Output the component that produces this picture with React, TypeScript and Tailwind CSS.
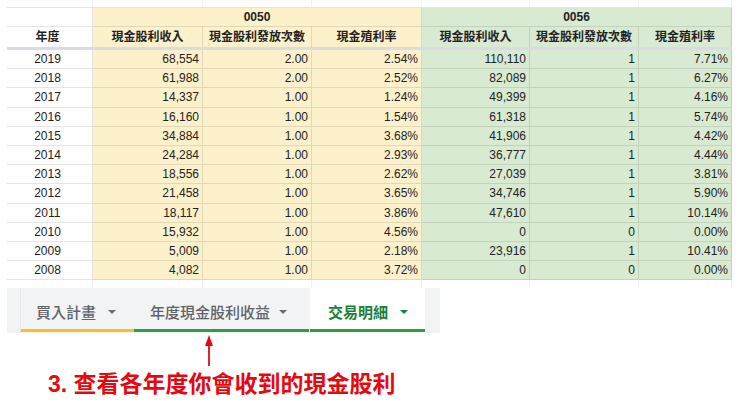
import React from "react";

const COLS = "grid grid-cols-[86px_110px_109px_110px_108px_109px_93px]";

type Row = [string, string, string, string, string, string, string];

const rows: Row[] = [
  ["2019", "68,554", "2.00", "2.54%", "110,110", "1", "7.71%"],
  ["2018", "61,988", "2.00", "2.52%", "82,089", "1", "6.27%"],
  ["2017", "14,337", "1.00", "1.24%", "49,399", "1", "4.16%"],
  ["2016", "16,160", "1.00", "1.54%", "61,318", "1", "5.74%"],
  ["2015", "34,884", "1.00", "3.68%", "41,906", "1", "4.42%"],
  ["2014", "24,284", "1.00", "2.93%", "36,777", "1", "4.44%"],
  ["2013", "18,556", "1.00", "2.62%", "27,039", "1", "3.81%"],
  ["2012", "21,458", "1.00", "3.65%", "34,746", "1", "5.90%"],
  ["2011", "18,117", "1.00", "3.86%", "47,610", "1", "10.14%"],
  ["2010", "15,932", "1.00", "4.56%", "0", "0", "0.00%"],
  ["2009", "5,009", "1.00", "2.18%", "23,916", "1", "10.41%"],
  ["2008", "4,082", "1.00", "3.72%", "0", "0", "0.00%"],
];

const bgFor = (i: number) =>
  i === 0 ? "bg-white" : i <= 3 ? "bg-[#fdf1cb]" : "bg-[#d9ead3]";

function Caret({ color }: { color: string }) {
  return (
    <svg width="8" height="4" viewBox="0 0 8 4" className="shrink-0">
      <polygon points="0,0 8,0 4,4" fill={color} />
    </svg>
  );
}

export default function App() {
  const headers = ["年度", "現金股利收入", "現金股利發放次數", "現金殖利率", "現金股利收入", "現金股利發放次數", "現金殖利率"];
  return (
    <div
      className="w-[740px] h-[404px] bg-white overflow-hidden text-[#222222]"
      style={{ fontFamily: '"Liberation Sans", Arial, "Noto Sans CJK TC", sans-serif' }}
    >
      {/* faint column header remnants */}
      <div className={`${COLS} h-[7px] ml-[7px]`}>
        {headers.map((_, i) => (
          <div key={i} className="border-r border-[#f2f2f2]" />
        ))}
      </div>

      <div className="ml-[7px] w-[725px] border-t border-[#e3e3e3]">
        {/* group header */}
        <div className={`${COLS} h-[19px]`}>
          <div className="bg-white border-r border-b border-black/10" />
          <div className="col-span-3 bg-[#fdf1cb] border-r border-b border-black/10 flex items-center justify-center text-[12px] font-bold">
            0050
          </div>
          <div className="col-span-3 bg-[#d9ead3] border-r border-b border-black/10 flex items-center justify-center text-[12px] font-bold">
            0056
          </div>
        </div>
        {/* column header */}
        <div className={`${COLS} h-[20px]`}>
          {headers.map((h, i) => (
            <div
              key={i}
              className={`${bgFor(i)} border-r border-black/10 flex items-center justify-center text-[12px] font-bold whitespace-nowrap ${i === 0 ? "pr-[4px]" : ""}`}
            >
              {h}
            </div>
          ))}
        </div>
        {/* frozen row divider */}
        <div className="h-[3px] bg-[#d9dde3]" />
        {/* data rows */}
        {rows.map((r, ri) => (
          <div key={ri} className={`${COLS} h-[19.2px]`}>
            {r.map((v, i) => (
              <div
                key={i}
                className={`${bgFor(i)} border-r border-b border-black/10 flex items-center text-[12px] ${
                  i === 0 ? "justify-center pr-[4px]" : "justify-end pr-[3px]"
                }`}
              >
                {v}
              </div>
            ))}
          </div>
        ))}
        {/* trailing partial row */}
        <div className={`${COLS} h-[8px]`}>
          {headers.map((_, i) => (
            <div key={i} className="border-r border-[#f0f0f0]" />
          ))}
        </div>
      </div>

      {/* sheet tabs */}
      <div
        className="ml-[7px] w-[433px] h-[45px] bg-[#f1f3f4] flex pl-[13px]"
        style={{ fontFamily: '"Noto Sans CJK TC", "Liberation Sans", sans-serif' }}
      >
        <div className="w-[114px] flex flex-col border-l border-[#e6e7e8]">
          <div className="h-[41px] flex items-center pt-[6px] pl-[15px] gap-[12px] text-[15px] font-medium text-[#5f6368]">
            <span>買入計畫</span>
            <Caret color="#6b6f73" />
          </div>
          <div className="h-[3px] bg-[#f6c026]" />
        </div>
        <div className="w-[175px] flex flex-col">
          <div className="h-[41px] flex items-center pt-[6px] pl-[16px] gap-[9px] text-[15px] font-medium text-[#5f6368]">
            <span>年度現金股利收益</span>
            <Caret color="#6b6f73" />
          </div>
          <div className="h-[3px] bg-[#2f9e47]" />
        </div>
        <div className="w-[1px]" />
        <div className="w-[115px] flex flex-col bg-white">
          <div className="h-[41px] flex items-center pt-[6px] pl-[18px] gap-[12px] text-[15px] font-bold text-[#188038]">
            <span>交易明細</span>
            <Caret color="#188038" />
          </div>
          <div className="h-[3px] bg-[#2f9e47]" />
        </div>
      </div>

      {/* annotation arrow */}
      <div className="ml-[204px] mt-[2px] h-[31px]">
        <svg width="10" height="31" viewBox="0 0 10 31">
          <polygon points="5,0 1,11 9,11" fill="#e4080f" />
          <line x1="5" y1="10" x2="5" y2="31" stroke="#e4080f" strokeWidth="1.8" />
        </svg>
      </div>

      <div
        className="ml-[48px] mt-[4px] text-[23px] leading-[28px] font-bold text-[#e4080f] whitespace-nowrap"
        style={{ fontFamily: '"Liberation Sans", "Noto Sans CJK TC", sans-serif' }}
      >
        3. 查看各年度你會收到的現金股利
      </div>
    </div>
  );
}
